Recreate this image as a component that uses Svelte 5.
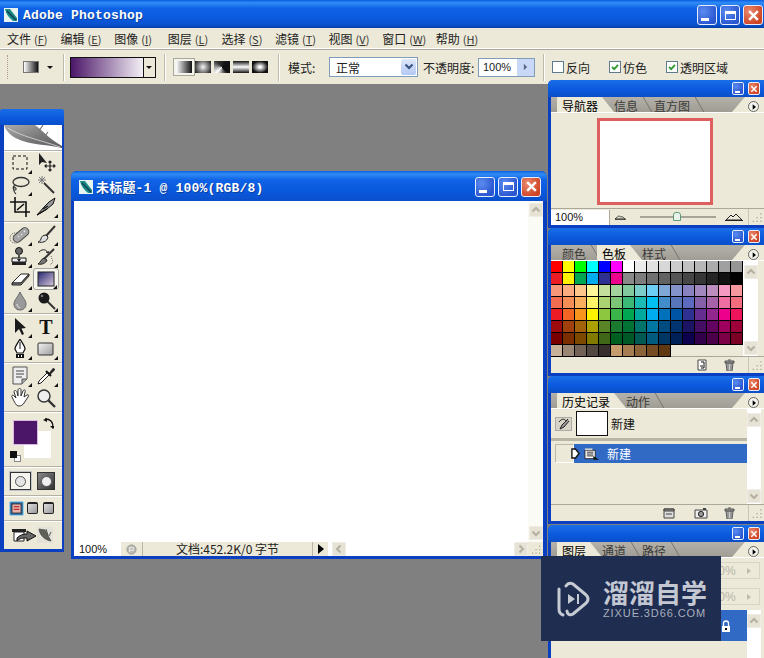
<script>
	const menus = [
		['文件', 'F'],
		['编辑', 'E'],
		['图像', 'I'],
		['图层', 'L'],
		['选择', 'S'],
		['滤镜', 'T'],
		['视图', 'V'],
		['窗口', 'W'],
		['帮助', 'H']
	];

	const gradientTypes = ['linear active', 'radial', 'angle', 'reflected', 'diamond'];

	// standard photoshop swatches, 16 per row
	const swatches = [
		'ff0000 ffff00 00ff00 00ffff 0000ff ff00ff ffffff ebebeb e1e1e1 d7d7d7 cccccc c2c2c2 b7b7b7 acacac a0a0a0 959595',
		'ed1c24 fff200 00a651 00aeef 2e3192 ec008c 898989 7d7d7d 707070 626262 555555 464646 363636 252525 111111 000000',
		'f7977a f9ad81 fdc68a fff79a c4df9b a2d39c 82ca9d 7bcdc9 6ecff6 7ea7d8 8493ca 8882be a187be bc8dbf f49ac2 f6989d',
		'f26c4f f68e55 fbaf5c fff467 acd372 7cc576 3bb878 1abbb4 00bff3 438cca 5574b9 5c6bc0 855fa8 a763a8 ee6ea1 f26d7d',
		'ed1c24 f26522 f7941d fff200 8dc63f 39b54a 00a651 00a99d 00aeef 0072bc 0054a6 2e3192 662d91 92278f ec008c ed145b',
		'9e0b0f a0410d a36209 aba000 598527 1a7b30 007236 00746b 0076a3 004b80 003471 1b1464 440e62 630460 9e005d 9e0039',
		'790000 7b2e00 7d4900 827b00 406618 005e20 005826 005952 005b7f 003663 002157 0d004c 32004b 4b0049 7b0046 7a0026',
		'c7b299 998675 736357 534741 362f2d c69c6d a67c52 8c6239 754c24 603913'
	]
		.join(' ')
		.split(' ');
</script>

{#snippet psIcon()}
	<svg class="ps-icon" viewBox="0 0 14 14">
		<rect width="14" height="14" fill="#e8f4f0" />
		<path d="M1 1 L6 1 L13 10 L13 13 L9 13 C5 10 2 6 1 1 Z" fill="#1c8a86" />
		<path d="M3 3 L12 12" stroke="#0b3f52" stroke-width="1.4" />
	</svg>
{/snippet}

{#snippet winButtons(showMax)}
	<div class="win-btns">
		<div class="win-btn"><span class="min-mark"></span></div>
		{#if showMax}
			<div class="win-btn"><span class="max-mark"></span></div>
		{/if}
		<div class="win-btn close">
			<svg viewBox="0 0 12 12"><path d="M2 2 L10 10 M10 2 L2 10" /></svg>
		</div>
	</div>
{/snippet}

{#snippet chevron(dir)}
	<div class="scroll-btn {dir}">
		<svg viewBox="0 0 10 10"><path d="M1.5 6.5 L5 3 L8.5 6.5" /></svg>
	</div>
{/snippet}

{#snippet tabStrip(tabs, active)}
	<div class="tabs">
		{#each tabs as tab, i}
			<div class="tab" class:active={i === active}>{tab}</div>
		{/each}
		<div class="tabs-end"></div>
		<div class="panel-menu"><svg viewBox="0 0 6 8"><path d="M1 0 L6 4 L1 8 Z" /></svg></div>
	</div>
{/snippet}

{#snippet grip()}
	<svg class="grip" viewBox="0 0 12 12">
		<path d="M9 3h1v1H9z M6 6h1v1H6z M9 6h1v1H9z M3 9h1v1H3z M6 9h1v1H6z M9 9h1v1H9z" fill="#a8a494" />
	</svg>
{/snippet}

<div class="app">
	<header class="titlebar">
		{@render psIcon()}
		<span class="app-name">Adobe Photoshop</span>
		{@render winButtons(true)}
	</header>

	<nav class="menubar">
		{#each menus as [label, key]}
			<div class="menu-item">{label}<span class="key">(<u>{key}</u>)</span></div>
		{/each}
	</nav>

	<div class="options">
		<div class="opt-grip"></div>
		<div class="preset">
			<div class="preset-swatch"></div>
			<span class="mini-arrow"></span>
		</div>
		<div class="opt-sep"></div>
		<div class="gradient-picker">
			<div class="gradient-fill"></div>
			<div class="gradient-arrow"><span class="mini-arrow"></span></div>
		</div>
		<div class="opt-sep"></div>
		<div class="grad-types">
			{#each gradientTypes as type}
				<div class="grad-type {type}"></div>
			{/each}
		</div>
		<div class="opt-sep"></div>
		<span class="opt-label mode-label">模式:</span>
		<div class="select">
			<span>正常</span>
			<div class="select-btn">
				<svg viewBox="0 0 10 8"><path d="M1.5 1.5 L5 5 L8.5 1.5" /></svg>
			</div>
		</div>
		<span class="opt-label opacity-label">不透明度:</span>
		<div class="opacity">
			<span>100%</span>
			<div class="opacity-btn"><svg viewBox="0 0 6 8"><path d="M1 0 L5 4 L1 8 Z" /></svg></div>
		</div>
		<div class="opt-sep"></div>
		<label class="check first"><span class="box"></span>反向</label>
		<label class="check second">
			<span class="box"><svg viewBox="0 0 10 10"><path d="M2 5 L4.2 7.2 L8 2.8" /></svg></span>仿色
		</label>
		<label class="check third">
			<span class="box"><svg viewBox="0 0 10 10"><path d="M2 5 L4.2 7.2 L8 2.8" /></svg></span>透明区域
		</label>
	</div>

	<main class="workspace">
		<!-- toolbox -->
		<aside class="toolbox">
			<div class="toolbox-title"></div>
			<div class="feather">
				<svg viewBox="0 0 58 24">
					<defs>
						<linearGradient id="featherFill" x1="0" x2="1" y1="0" y2="1">
							<stop offset="0" stop-color="#adadad" />
							<stop offset="0.55" stop-color="#787878" />
							<stop offset="1" stop-color="#5c5c5c" />
						</linearGradient>
					</defs>
					<path
						d="M0 0 L31 0 C37 4 44 13 58 21 L58 23 C46 20 33 20 22 17 C11 14 3 9 0 0 Z"
						fill="url(#featherFill)"
					/>
					<path d="M4 3 C16 11 36 15 56 22" stroke="#dcdcdc" stroke-width="0.8" fill="none" />
					<path d="M35 6 L39 0 M41 11 L44 7" stroke="#777" stroke-width="1.2" />
				</svg>
			</div>

			<div class="tool-group g3">
				<div class="tool fly">
					<svg viewBox="0 0 22 20"><rect x="4" y="3" width="14" height="13" fill="none" stroke="#111" stroke-dasharray="3 2" /></svg>
				</div>
				<div class="tool">
					<svg viewBox="0 0 22 20">
						<path d="M4 0 L4 12 L7 9 L12 10 Z" fill="#222" />
						<path d="M15 8 V18 M10 13 H20 M13.5 9.5 L15 8 L16.5 9.5 M13.5 16.5 L15 18 L16.5 16.5 M11.5 11.5 L10 13 L11.5 14.5 M18.5 11.5 L20 13 L18.5 14.5" fill="none" stroke="#222" stroke-width="1.2" />
					</svg>
				</div>
				<div class="tool fly">
					<svg viewBox="0 0 22 20">
						<ellipse cx="12" cy="7" rx="8" ry="4.5" fill="none" stroke="#333" stroke-width="1.3" />
						<path d="M6 10 C3 12 4 15 6 15 C8 15 7 12 5 12 C4 15 5 17 7 19" fill="none" stroke="#333" stroke-width="1.1" />
					</svg>
				</div>
				<div class="tool">
					<svg viewBox="0 0 22 20">
						<path d="M9 8 L19 18" stroke="#333" stroke-width="2" />
						<path d="M7 1 V9 M3 5 H11 M4 2 L10 8 M10 2 L4 8" stroke="#777" stroke-width="1" />
					</svg>
				</div>
				<div class="tool">
					<svg viewBox="0 0 22 20"><path d="M6 0 V15 H21 M1 5 H17 V20 M8 13 L15 7" fill="none" stroke="#111" stroke-width="1.6" /></svg>
				</div>
				<div class="tool fly">
					<svg viewBox="0 0 22 20">
						<path d="M2 18 L10 9 L14 5 L20 1 L18 7 L12 12 Z" fill="#999" stroke="#111" />
						<path d="M2 18 L12 12 M8 12 L13 9" stroke="#111" stroke-width="1.2" />
					</svg>
				</div>
			</div>

			<div class="tool-group g4">
				<div class="tool fly">
					<svg viewBox="0 0 22 20">
						<circle cx="6" cy="13" r="5" fill="none" stroke="#555" stroke-dasharray="1 1" />
						<rect x="3" y="6" width="18" height="8" rx="4" transform="rotate(-40 12 10)" fill="#a6a6a6" stroke="#444" />
						<path d="M9 11 L10 12 M12 9 L13 10 M15 6 L16 7" stroke="#eee" stroke-width="1.2" />
					</svg>
				</div>
				<div class="tool fly">
					<svg viewBox="0 0 22 20">
						<path d="M20 1 L11 11" stroke="#333" stroke-width="2" />
						<path d="M11 10 C8 10 6 12 6 14 C5 16 4 17 3 17 C7 18 12 17 13 12 Z" fill="#ddd" stroke="#222" />
					</svg>
				</div>
				<div class="tool fly">
					<svg viewBox="0 0 22 20">
						<circle cx="10" cy="4" r="3.5" fill="#666" stroke="#111" />
						<path d="M9 7 H11 V11 H9 Z" fill="#555" />
						<path d="M3 11 H17 V15 H3 Z" fill="#eee" stroke="#111" />
						<path d="M3 15 H17 V18 H3 Z" fill="#222" />
						<path d="M8 12 L12 12 L10 15 Z" fill="#222" />
					</svg>
				</div>
				<div class="tool fly">
					<svg viewBox="0 0 22 20">
						<path d="M19 2 L9 12" stroke="#333" stroke-width="2" />
						<path d="M9 11 C6 12 6 15 3 17 C7 18 11 16 12 13 Z" fill="#777" stroke="#222" />
						<path d="M4 5 C8 1 12 3 13 6 M13 6 L11 5 M13 6 L14 4" fill="none" stroke="#222" />
						<path d="M16 9 L18 15 L15 18" fill="none" stroke="#666" stroke-dasharray="1 1" />
					</svg>
				</div>
				<div class="tool fly">
					<svg viewBox="0 0 22 20">
						<path d="M3 14 L12 5 L20 5 L12 14 Z" fill="#fff" stroke="#222" />
						<path d="M3 14 L3 16 L12 16 L20 7 L20 5 L12 14 Z" fill="#888" stroke="#222" />
					</svg>
				</div>
				<div class="tool fly picked">
					<svg viewBox="0 0 22 20">
						<defs>
							<linearGradient id="gradTool" x1="0" x2="1" y1="0" y2="1">
								<stop offset="0" stop-color="#26276e" />
								<stop offset="1" stop-color="#d9c8de" />
							</linearGradient>
						</defs>
						<rect x="3" y="3" width="16" height="14" fill="url(#gradTool)" stroke="#222" />
					</svg>
				</div>
				<div class="tool fly">
					<svg viewBox="0 0 22 20">
						<path d="M11 1 C9 6 5 9 5 13 C5 17 8 19 11 19 C14 19 17 17 17 13 C17 9 13 6 11 1 Z" fill="#999" stroke="#666" />
						<path d="M8 13 C8 15 9 16 11 17" stroke="#eee" fill="none" />
					</svg>
				</div>
				<div class="tool fly">
					<svg viewBox="0 0 22 20">
						<path d="M12 10 L20 18" stroke="#333" stroke-width="2" />
						<circle cx="9" cy="7" r="5.5" fill="#1a1a1a" />
						<circle cx="7" cy="5" r="1.3" fill="#777" />
					</svg>
				</div>
			</div>

			<div class="tool-group g2">
				<div class="tool fly">
					<svg viewBox="0 0 22 20"><path d="M6 1 L6 16 L10 12 L13 18 L15 17 L12.5 11.5 L17 11 Z" fill="#1a1a1a" /></svg>
				</div>
				<div class="tool fly"><span class="type-t">T</span></div>
				<div class="tool fly">
					<svg viewBox="0 0 22 20">
						<path d="M11 0 C9 4 6 7 6 10 L8 14 H14 L16 10 C16 7 13 4 11 0 Z" fill="#fff" stroke="#111" stroke-width="1.2" />
						<path d="M11 3 V10" stroke="#111" />
						<path d="M7 15 H15 V19 H7 Z" fill="#111" />
						<path d="M9 16 H10 V18 H9 Z M12 16 H13 V18 H12 Z" fill="#fff" />
					</svg>
				</div>
				<div class="tool fly">
					<svg viewBox="0 0 22 20">
						<defs>
							<linearGradient id="rectTool" x1="0" x2="1" y1="0" y2="1">
								<stop offset="0" stop-color="#f4f4f4" />
								<stop offset="1" stop-color="#9c9c9c" />
							</linearGradient>
						</defs>
						<rect x="3" y="4" width="15" height="12" rx="1" fill="url(#rectTool)" stroke="#333" />
					</svg>
				</div>
			</div>

			<div class="tool-group g2">
				<div class="tool fly">
					<svg viewBox="0 0 22 20">
						<path d="M4 1 H18 V13 L13 18 H4 Z" fill="#eee" stroke="#555" />
						<path d="M7 5 H15 M7 8 H15 M7 11 H13" stroke="#444" />
						<path d="M18 13 H13 V18" fill="#aaa" stroke="#555" />
					</svg>
				</div>
				<div class="tool fly">
					<svg viewBox="0 0 22 20">
						<path d="M13 6 L4 15 L3 18 L6 17 L15 8 Z" fill="#fff" stroke="#222" />
						<path d="M11 5 L16 10" stroke="#111" stroke-width="2" />
						<path d="M14 7 L18 2 A2 2 0 0 1 20 4 L15 9 Z" fill="#222" />
					</svg>
				</div>
				<div class="tool">
					<svg viewBox="0 0 22 20">
						<path d="M3 9 C2 8 4 6 5 8 L7 10 L5 4 C5 2 7 2 8 4 L9 8 L9 2 C9 0 12 0 12 2 L12 8 L14 3 C15 1 17 2 16 4 L15 9 L18 7 C20 6 20 8 19 9 L15 15 C14 17 12 18 10 18 C7 18 6 15 3 9 Z" fill="#fff" stroke="#333" />
					</svg>
				</div>
				<div class="tool">
					<svg viewBox="0 0 22 20">
						<path d="M13 12 L20 19" stroke="#333" stroke-width="2.4" />
						<circle cx="9" cy="8" r="6" fill="#eee" stroke="#333" stroke-width="1.4" />
					</svg>
				</div>
			</div>

			<div class="colors">
				<div class="bg-color"></div>
				<div class="fg-color"></div>
				<svg class="swap" viewBox="0 0 12 12">
					<path d="M3 1 C8 1 11 4 11 9" fill="none" stroke="#111" stroke-width="1.3" />
					<path d="M5 0 L1 2 L5 4 Z M8 8 L14 8 L11 11 Z" fill="#111" />
				</svg>
				<div class="default-colors"><span class="d-bg"></span><span class="d-fg"></span></div>
			</div>

			<div class="mask-row">
				<div class="mask standard"><span></span></div>
				<div class="mask quick"><span></span></div>
			</div>

			<div class="screen-row">
				<div class="screen active">
					<svg viewBox="0 0 12 12"><rect x="1" y="1" width="10" height="10" fill="#e8b0a8" stroke="#223" /><path d="M3 4 H9 M3 7 H9" stroke="#b33" stroke-width="1.4" /></svg>
				</div>
				<div class="screen"></div>
				<div class="screen"></div>
			</div>

			<div class="jump-row">
				<svg class="jump-arrow" viewBox="0 0 26 16">
					<path d="M1 2 H15 V5 H1 Z" fill="#222" />
					<path d="M3 5 H13 V14 H3 Z" fill="#fff" stroke="#222" />
					<path d="M6 11 C9 8 12 7 16 7 L16 4 L25 9 L16 14 L16 11 C12 11 9 11 6 14 Z" fill="#666" stroke="#111" />
				</svg>
				<svg class="jump-logo" viewBox="0 0 16 16">
					<rect width="16" height="16" fill="#e4e2d8" />
					<path d="M2 2 L8 3 L14 14 C8 13 3 9 2 2 Z" fill="#5f6058" stroke="#333" stroke-width="0.6" />
					<path d="M9 2 L11 8 M14 5 L12 9" stroke="#555" />
				</svg>
			</div>
		</aside>

		<!-- document window -->
		<section class="doc">
			<div class="doc-title">
				{@render psIcon()}
				<span class="doc-name">未标题-1 @ 100%(RGB/8)</span>
				{@render winButtons(true)}
			</div>
			<div class="doc-body">
				<div class="canvas"></div>
				<div class="v-scroll">
					{@render chevron('up')}
					{@render chevron('down')}
				</div>
			</div>
			<div class="doc-status">
				<div class="zoom-box">100%</div>
				<div class="status-icon">
					<svg viewBox="0 0 12 12"><circle cx="6" cy="6" r="5" fill="#bcbab0" stroke="#999" /><path d="M4 9 V4 H8 V7 H4" fill="none" stroke="#eee" /></svg>
				</div>
				<div class="doc-info">文档:452.2K/0 字节</div>
				<div class="status-arrow"><svg viewBox="0 0 6 10"><path d="M0 0 L6 5 L0 10 Z" /></svg></div>
				<div class="h-scroll">
					{@render chevron('left')}
					<div class="h-track"></div>
					{@render chevron('right')}
				</div>
				{@render grip()}
			</div>
		</section>

		<!-- navigator -->
		<section class="panel nav-panel">
			<div class="panel-title">{@render winButtons(false)}</div>
			{@render tabStrip(['导航器', '信息', '直方图'], 0)}
			<div class="nav-view"><div class="proxy"></div></div>
			<div class="panel-foot nav-foot">
				<div class="nav-zoom">100%</div>
				<svg class="mount small" viewBox="0 0 14 7"><path d="M0 6 L5 2 L7 3.5 L9 3 L13 6 Z" fill="none" stroke="#222" /><path d="M0 6.5 H14" stroke="#222" /></svg>
				<div class="slider"><span class="thumb"></span></div>
				<svg class="mount big" viewBox="0 0 18 8"><path d="M1 7 L6 2 L8 4 L11 1 L17 7 Z" fill="none" stroke="#222" /><path d="M0 7.5 H18" stroke="#222" /></svg>
				{@render grip()}
			</div>
		</section>

		<!-- swatches -->
		<section class="panel swatch-panel">
			<div class="panel-title">{@render winButtons(false)}</div>
			{@render tabStrip(['颜色', '色板', '样式'], 1)}
			<div class="panel-body">
				<div class="swatches">
					{#each swatches as hex}
						<span class="swatch" style="background:#{hex}"></span>
					{/each}
				</div>
				<div class="v-scroll pale">
					{@render chevron('up')}
					{@render chevron('down')}
				</div>
			</div>
			<div class="panel-foot">
				<div class="foot-spacer"></div>
				<svg class="foot-icon" viewBox="0 0 12 12"><path d="M2 1 H10 V11 H2 Z" fill="#fff" stroke="#444" /><path d="M5 3 H8 V9 H5 M7 7 H4" fill="none" stroke="#111" /></svg>
				<svg class="foot-icon trash" viewBox="0 0 12 12"><path d="M3 4 H10 L9 12 H4 Z" fill="#ccc" stroke="#555" /><path d="M2 2 H11 V4 H2 Z M5 1 H8" fill="#999" stroke="#555" /><path d="M5 5 V11 M8 5 V11" stroke="#666" /></svg>
				{@render grip()}
			</div>
		</section>

		<!-- history -->
		<section class="panel history-panel">
			<div class="panel-title">{@render winButtons(false)}</div>
			{@render tabStrip(['历史记录', '动作'], 0)}
			<div class="panel-body">
				<div class="history-list">
					<div class="snapshot">
						<div class="snap-brush">
							<svg viewBox="0 0 12 12"><path d="M10 1 L4 7 L2 11 L6 9 L11 3" fill="#999" stroke="#222" /><path d="M1 4 C4 0 7 1 8 3" fill="none" stroke="#222" /></svg>
						</div>
						<div class="snap-thumb"></div>
						<span>新建</span>
					</div>
					<div class="history-state">
						<div class="state-box"></div>
						<div class="state-row">
							<svg class="state-arrow" viewBox="0 0 10 12"><path d="M1 1 H5 L9 6 L5 11 H1 Z" fill="#fff" stroke="#111" stroke-width="1.5" /></svg>
							<svg class="state-icon" viewBox="0 0 16 14"><path d="M1 3 H12 V12 H1 Z" fill="#fff" stroke="#222" /><path d="M1 1 H9 V3 H1 Z" fill="#ccc" /><path d="M3 5 H10 M3 7 H10 M3 9 H10" stroke="#222" /><path d="M10 9 L16 13 H10 Z" fill="#111" /></svg>
							<span>新建</span>
						</div>
					</div>
				</div>
				<div class="v-scroll pale">
					{@render chevron('up')}
					{@render chevron('down')}
				</div>
			</div>
			<div class="panel-foot">
				<div class="foot-spacer"></div>
				<svg class="foot-icon set" viewBox="0 0 12 12"><path d="M1 2 H11 V11 H1 Z" fill="#ddd" stroke="#444" /><path d="M1 2 H11 V4 H1 Z M3 7 H9" fill="#888" stroke="#444" /></svg>
				<svg class="foot-icon camera" viewBox="0 0 14 12"><path d="M1 3 H13 V11 H1 Z" fill="#eee" stroke="#444" /><circle cx="7" cy="7" r="2.6" fill="#999" stroke="#222" /><path d="M9 1 H12 V3 H9 Z" fill="#444" /></svg>
				<svg class="foot-icon trash" viewBox="0 0 12 12"><path d="M3 4 H10 L9 12 H4 Z" fill="#ccc" stroke="#555" /><path d="M2 2 H11 V4 H2 Z M5 1 H8" fill="#999" stroke="#555" /><path d="M5 5 V11 M8 5 V11" stroke="#666" /></svg>
				{@render grip()}
			</div>
		</section>

		<!-- layers, mostly under the watermark -->
		<section class="panel layers-panel">
			<div class="panel-title">{@render winButtons(false)}</div>
			{@render tabStrip(['图层', '通道', '路径'], 0)}
			<div class="layer-opts">
				<div class="layer-field"><span>100%</span><i></i></div>
				<div class="layer-field"><span>100%</span><i></i></div>
			</div>
			<div class="panel-body">
				<div class="layer-list">
					<div class="layer-row">
						<svg class="lock" viewBox="0 0 12 12"><path d="M3.5 6 V3.5 A2.5 2.5 0 0 1 8.5 3.5 V6" fill="none" stroke="#fff" stroke-width="1.3" /><path d="M2 6 H10 V12 H2 Z" fill="#fff" /><path d="M5 8 H7 V10 H5 Z" fill="#111" /></svg>
					</div>
				</div>
				<div class="v-scroll pale">{@render chevron('up')}</div>
			</div>
		</section>

		<!-- watermark -->
		<div class="watermark">
			<svg class="wm-logo" viewBox="0 0 34 36">
				<path d="M3 8 V28 C3 31 4 33 7 34" fill="none" stroke="#c5cad3" stroke-width="3" stroke-linecap="round" />
				<path d="M10 5 C12 2 15 2 17 3 L29 13 C33 16 33 20 29 23 L17 33 C14 35 11 33 11 30" fill="none" stroke="#c5cad3" stroke-width="3" stroke-linecap="round" />
				<path d="M12 13 L19 18 L12 23 Z" fill="#c5cad3" />
				<path d="M21 13 H23 V23 H21 Z" fill="#c5cad3" />
			</svg>
			<div class="wm-text">
				<div class="wm-name">溜溜自学</div>
				<div class="wm-url">ZIXUE.3D66.COM</div>
			</div>
		</div>
	</main>
</div>

<style>
	:global(body) {
		margin: 0;
		background: #808080;
	}
	.app {
		width: 764px;
		height: 658px;
		display: flex;
		flex-direction: column;
		overflow: hidden;
		font-family: 'Noto Sans CJK SC', 'Liberation Sans', sans-serif;
		font-size: 12px;
		color: #111;
		background: #808080;
	}

	/* Main window chrome */
	.titlebar {
		height: 28px;
		flex: none;
		display: flex;
		align-items: center;
		padding: 2px 1px 0 4px;
		box-sizing: border-box;
		background: linear-gradient(to bottom, #0a5ee0 0%, #2f8cf5 10%, #0f62e6 30%, #0a58dc 70%, #0a4fcb 90%, #003ea8 100%);
	}
	.ps-icon {
		width: 14px;
		height: 14px;
		flex: none;
	}
	.app-name {
		margin-left: 5px;
		font-family: 'Liberation Mono', monospace;
		font-weight: 700;
		font-size: 13px;
		letter-spacing: 0.2px;
		color: #fff;
		text-shadow: 1px 1px 0 #0a3f9c;
	}
	.win-btns {
		margin-left: auto;
		display: flex;
		gap: 3px;
	}
	.win-btn {
		width: 18px;
		height: 18px;
		border: 1px solid #e8eefc;
		border-radius: 3px;
		background: radial-gradient(circle at 30% 30%, #5b8cf0, #2a56d0 75%);
		position: relative;
		display: flex;
		align-items: center;
		justify-content: center;
	}
	.win-btn.close {
		background: radial-gradient(circle at 30% 30%, #ea8a6e, #cf4526 75%);
	}
	.win-btn svg {
		width: 13px;
		height: 13px;
	}
	.win-btn svg path {
		stroke: #fff;
		stroke-width: 2.2;
		fill: none;
	}
	.min-mark {
		width: 8px;
		height: 3px;
		background: #fff;
		margin: 9px 5px 0 0;
	}
	.max-mark {
		width: 11px;
		height: 9px;
		border: 1px solid #fff;
		border-top-width: 3px;
		box-sizing: border-box;
	}

	.menubar {
		height: 21px;
		flex: none;
		display: flex;
		align-items: center;
		padding-left: 7px;
		background: #ece9d8;
		border-bottom: 1px solid #aca899;
		box-shadow: inset 0 -1px 0 #fff;
	}
	.menu-item {
		width: 53.6px;
		flex: none;
		white-space: nowrap;
		color: #222;
	}
	.key {
		font-size: 11px;
		margin-left: 3px;
		color: #333;
	}

	/* Options bar */
	.options {
		height: 34px;
		flex: none;
		display: flex;
		align-items: center;
		background: #ece9d8;
		color: #222;
	}
	.opt-grip {
		width: 1px;
		height: 24px;
		margin-left: 7px;
		border-left: 1px dotted #b09a90;
		box-sizing: border-box;
	}
	.opt-sep {
		width: 1px;
		height: 27px;
		background: #bdbaa9;
		border-right: 1px solid #fff;
		flex: none;
	}
	.preset {
		width: 55px;
		display: flex;
		align-items: center;
		padding-left: 15px;
		box-sizing: border-box;
	}
	.preset-swatch {
		width: 16px;
		height: 12px;
		background: linear-gradient(to right, #fff, #111);
		border: 1px solid #777;
		box-sizing: border-box;
	}
	.mini-arrow {
		width: 0;
		height: 0;
		border: 3px solid transparent;
		border-top: 3px solid #111;
		border-bottom: 0;
		margin-left: 8px;
	}
	.gradient-picker {
		width: 86px;
		height: 21px;
		margin: 0 8px 0 5px;
		border: 1px solid #111;
		box-sizing: border-box;
		display: flex;
		flex: none;
	}
	.gradient-fill {
		flex: 1;
		background: linear-gradient(to right, #4b1668, #f4f0f6);
	}
	.gradient-arrow {
		width: 11px;
		border-left: 1px solid #111;
		background: #ece9d8;
		display: flex;
		align-items: center;
	}
	.gradient-arrow .mini-arrow {
		margin-left: 2px;
	}
	.grad-types {
		display: flex;
		gap: 3px;
		width: 112px;
		padding-left: 10px;
		box-sizing: border-box;
	}
	.grad-type {
		width: 16px;
		height: 12px;
		flex: none;
	}
	.grad-type.linear {
		background: linear-gradient(to right, #fff, #111);
		outline: 2px solid #f4f3ec;
		box-shadow: 0 0 0 3px #a9a99a;
	}
	.grad-type.radial {
		background: radial-gradient(circle, #f4f4f4, #1c1c1c 95%);
	}
	.grad-type.angle {
		background: conic-gradient(from 45deg, #111 0 25%, #fff 50%, #333 75%, #111);
	}
	.grad-type.reflected {
		background: linear-gradient(to bottom, #111, #fff 50%, #111);
	}
	.grad-type.diamond {
		background: radial-gradient(ellipse, #fff 10%, #111 70%);
	}
	.opt-label {
		flex: none;
		white-space: nowrap;
	}
	.mode-label {
		margin-left: 8px;
		width: 41px;
	}
	.select {
		width: 89px;
		height: 20px;
		box-sizing: border-box;
		border: 1px solid #7f9db9;
		background: #fff;
		display: flex;
		align-items: center;
		justify-content: space-between;
		padding: 1px;
		flex: none;
	}
	.select span {
		padding-left: 5px;
	}
	.select-btn {
		width: 15px;
		height: 16px;
		border-radius: 2px;
		background: linear-gradient(to bottom, #dfe8fb, #b4c8f4);
		display: flex;
		align-items: center;
		justify-content: center;
	}
	.select-btn svg {
		width: 10px;
		height: 8px;
	}
	.select-btn path {
		fill: none;
		stroke: #33517e;
		stroke-width: 2;
	}
	.opacity-label {
		width: 55px;
		margin-left: 5px;
	}
	.opacity {
		width: 57px;
		height: 19px;
		box-sizing: border-box;
		border: 1px solid #7f9db9;
		background: #fff;
		display: flex;
		align-items: center;
		justify-content: space-between;
		margin-right: 8px;
		font-family: 'Liberation Sans', sans-serif;
		font-size: 11px;
		flex: none;
	}
	.opacity span {
		padding-left: 4px;
	}
	.opacity-btn {
		width: 17px;
		height: 100%;
		background: #c8d8f6;
		display: flex;
		align-items: center;
		justify-content: center;
	}
	.opacity-btn svg {
		width: 5px;
		height: 8px;
	}
	.opacity-btn path {
		fill: #5a6c8c;
	}
	.check {
		display: flex;
		align-items: center;
		gap: 2px;
		white-space: nowrap;
		flex: none;
	}
	.check.first {
		margin-left: 7px;
	}
	.check.second,
	.check.third {
		margin-left: 19px;
	}
	.box {
		width: 12px;
		height: 12px;
		box-sizing: border-box;
		border: 1px solid #5f7a8c;
		background: #fff;
		display: flex;
	}
	.box svg path {
		fill: none;
		stroke: #2f9a2f;
		stroke-width: 1.8;
	}

	/* Free canvas of floating windows */
	.workspace {
		flex: 1;
		position: relative;
	}

	.toolbox {
		position: absolute;
		left: 0;
		top: 25px;
		width: 64px;
		height: 443px;
		box-sizing: border-box;
		background: #ece9d8;
		border: solid #0a3fc0;
		border-width: 0 2px 3px 4px;
		display: flex;
		flex-direction: column;
		border-radius: 4px 4px 0 0;
	}
	.toolbox-title {
		height: 16px;
		margin: 0 -2px 0 -4px;
		flex: none;
		background: linear-gradient(to bottom, #1a6ee8, #0a58dc 60%, #0a4fc8);
		border-radius: 3px 3px 0 0;
	}
	.feather {
		height: 25px;
		background: #fff;
		flex: none;
		overflow: hidden;
	}
	.feather svg {
		width: 58px;
		height: 24px;
		display: block;
	}
	.tool-group {
		display: grid;
		grid-template-columns: 26px 26px;
		grid-auto-rows: 22px;
		padding: 2px 0 0 3px;
		border-top: 1px solid #b4b2a4;
		box-shadow: inset 0 1px 0 #fff;
		flex: none;
		box-sizing: border-box;
	}
	.g3 {
		height: 71px;
		padding-top: 1px;
	}
	.g4 {
		height: 92px;
		padding-top: 2px;
	}
	.g2 {
		height: 49px;
		padding-top: 2px;
	}
	.tool {
		position: relative;
		display: flex;
		align-items: center;
		justify-content: center;
	}
	.tool svg {
		width: 22px;
		height: 20px;
	}
	.tool.fly::after {
		content: '';
		position: absolute;
		right: 1px;
		bottom: 0;
		border: 2px solid transparent;
		border-right-color: #111;
		border-bottom-color: #111;
	}
	.tool.picked {
		background: #f6f5ee;
		border: 1px solid #a6a6a0;
		border-radius: 3px;
		box-sizing: border-box;
	}
	.type-t {
		font-family: 'Liberation Serif', serif;
		font-weight: 700;
		font-size: 20px;
		line-height: 20px;
		color: #111;
	}

	.colors {
		height: 55px;
		flex: none;
		position: relative;
		border-top: 1px solid #b4b2a4;
		box-shadow: inset 0 1px 0 #fff;
		box-sizing: border-box;
	}
	.fg-color {
		position: absolute;
		left: 9px;
		top: 8px;
		width: 25px;
		height: 25px;
		background: #4b1668;
		border: 1px solid #d8b8e0;
		box-sizing: border-box;
	}
	.bg-color {
		position: absolute;
		left: 20px;
		top: 19px;
		width: 27px;
		height: 27px;
		background: #fff;
	}
	.swap {
		position: absolute;
		left: 38px;
		top: 6px;
		width: 12px;
		height: 12px;
	}
	.default-colors {
		position: absolute;
		left: 6px;
		top: 39px;
		width: 11px;
		height: 11px;
	}
	.d-bg,
	.d-fg {
		position: absolute;
		display: block;
		width: 7px;
		height: 7px;
	}
	.d-bg {
		right: 0;
		bottom: 0;
		background: #fff;
		border: 1px solid #888;
		box-sizing: border-box;
	}
	.d-fg {
		left: 0;
		top: 0;
		background: #111;
	}

	.mask-row {
		height: 29px;
		flex: none;
		display: flex;
		align-items: center;
		gap: 5px;
		padding-left: 6px;
		border-top: 1px solid #b4b2a4;
		box-shadow: inset 0 1px 0 #fff;
		box-sizing: border-box;
	}
	.mask {
		display: flex;
		align-items: center;
		justify-content: center;
		box-sizing: border-box;
		height: 18px;
	}
	.mask span {
		width: 11px;
		height: 11px;
		border-radius: 50%;
		border: 1px solid #555;
		box-sizing: border-box;
	}
	.mask.standard {
		width: 21px;
		background: #f5f4ee;
		border: 1px solid #333;
		box-shadow: 0 0 0 1px #bfc5c8;
	}
	.mask.standard span {
		background: #e4e4e4;
	}
	.mask.quick {
		width: 18px;
		margin-left: 1px;
		background: linear-gradient(to bottom right, #888, #333);
		border: 1px solid #333;
	}
	.mask.quick span {
		background: #f0f0f0;
	}

	.screen-row {
		height: 25px;
		flex: none;
		display: flex;
		align-items: center;
		gap: 3px;
		padding-left: 5px;
		border-top: 1px solid #b4b2a4;
		box-shadow: inset 0 1px 0 #fff;
		box-sizing: border-box;
	}
	.screen {
		width: 11px;
		height: 12px;
		border: 1px solid #222;
		border-top-width: 2px;
		background: linear-gradient(to bottom right, #ddd, #999);
		border-radius: 2px;
		box-sizing: border-box;
		flex: none;
	}
	.screen:last-child {
		margin-left: 2px;
	}
	.screen.active {
		width: 15px;
		height: 15px;
		background: #3a7fb0;
		border: 1px solid #9fd0e8;
		display: flex;
		align-items: center;
		justify-content: center;
	}
	.screen.active svg {
		width: 11px;
		height: 11px;
	}

	.jump-row {
		flex: 1;
		display: flex;
		align-items: center;
		padding-left: 7px;
		border-top: 1px solid #b4b2a4;
		box-shadow: inset 0 1px 0 #fff;
	}
	.jump-arrow {
		width: 26px;
		height: 16px;
	}
	.jump-logo {
		width: 16px;
		height: 16px;
	}

	/* Document window */
	.doc {
		position: absolute;
		left: 71px;
		top: 87px;
		width: 476px;
		height: 388px;
		box-sizing: border-box;
		background: #0a3fc0;
		border-radius: 6px 6px 0 0;
		padding: 0 4px 3px 3px;
		display: flex;
		flex-direction: column;
	}
	.doc-title {
		height: 30px;
		margin: 0 -4px 0 -3px;
		padding: 1px 6px 0 8px;
		flex: none;
		display: flex;
		align-items: center;
		box-sizing: border-box;
		background: linear-gradient(to bottom, #0a5ee0 0%, #2f8cf5 10%, #0f62e6 30%, #0a58dc 70%, #0a4fcb 100%);
		border-radius: 6px 6px 0 0;
	}
	.doc-name {
		margin-left: 3px;
		font-family: 'Liberation Mono', 'Noto Sans CJK SC', monospace;
		font-weight: 700;
		font-size: 13px;
		letter-spacing: 0.2px;
		color: #fff;
		text-shadow: 1px 1px 0 #0a3f9c;
		white-space: nowrap;
	}
	.doc-body {
		flex: 1;
		display: flex;
		min-height: 0;
	}
	.canvas {
		flex: 1;
		background: #fff;
	}
	.v-scroll {
		width: 15px;
		flex: none;
		background: #fbfbf6;
		display: flex;
		flex-direction: column;
		justify-content: space-between;
		align-items: center;
		padding: 2px 0;
		box-sizing: border-box;
	}
	.v-scroll.pale {
		width: 14px;
		margin-right: 3px;
		background: #fff;
		padding: 4px 0 1px;
	}
	.scroll-btn {
		width: 14px;
		height: 14px;
		background: #e6e3d6;
		border: 1px solid #f0eee4;
		box-sizing: border-box;
		display: flex;
		align-items: center;
		justify-content: center;
		flex: none;
	}
	.scroll-btn svg {
		width: 10px;
		height: 10px;
	}
	.scroll-btn path {
		fill: none;
		stroke: #b4b0a0;
		stroke-width: 2;
	}
	.scroll-btn.down svg {
		transform: rotate(180deg);
	}
	.scroll-btn.left svg {
		transform: rotate(-90deg);
	}
	.scroll-btn.right svg {
		transform: rotate(90deg);
	}
	.doc-status {
		height: 14px;
		flex: none;
		display: flex;
		background: #ece9d8;
		font-size: 12px;
		line-height: 14px;
	}
	.zoom-box {
		width: 47px;
		box-sizing: border-box;
		padding-left: 5px;
		background: #fff;
		font-family: 'Liberation Sans', sans-serif;
		font-size: 11px;
	}
	.status-icon {
		width: 22px;
		display: flex;
		align-items: center;
		justify-content: center;
		border-right: 1px solid #b8b5a6;
		box-sizing: border-box;
	}
	.status-icon svg {
		width: 11px;
		height: 11px;
	}
	.doc-info {
		width: 170px;
		text-align: center;
		color: #222;
		white-space: nowrap;
		box-sizing: border-box;
		border-right: 1px solid #b8b5a6;
	}
	.status-arrow {
		width: 15px;
		display: flex;
		align-items: center;
		justify-content: center;
		box-sizing: border-box;
	}
	.status-arrow svg {
		width: 6px;
		height: 10px;
	}
	.h-scroll {
		flex: 1;
		display: flex;
		background: #fff;
		padding-left: 4px;
	}
	.h-track {
		flex: 1;
	}
	.grip {
		width: 15px;
		height: 14px;
		flex: none;
		background: #ece9d8;
	}

	/* Palette windows */
	.panel {
		position: absolute;
		left: 548px;
		width: 216px;
		box-sizing: border-box;
		background: #ece9d8;
		border: solid #0a3fc0;
		border-width: 0 0 3px 3px;
		border-radius: 5px 0 0 0;
		display: flex;
		flex-direction: column;
	}
	.nav-panel {
		top: -4px;
		height: 148px;
	}
	.swatch-panel {
		top: 144px;
		height: 148px;
	}
	.history-panel {
		top: 292px;
		height: 148px;
	}
	.layers-panel {
		top: 441px;
		height: 140px;
		border-bottom: 0;
	}
	.panel-title {
		height: 17px;
		margin: 0 0 0 -3px;
		padding-right: 4px;
		flex: none;
		display: flex;
		align-items: center;
		background: linear-gradient(to bottom, #1a6ee8, #0a58dc 60%, #0a4fc8);
		border-radius: 5px 0 0 0;
	}
	.panel-title .win-btns {
		gap: 4px;
	}
	.panel-title .win-btn {
		width: 10px;
		height: 11px;
		border-radius: 2px;
	}
	.panel-title .win-btn svg {
		width: 8px;
		height: 8px;
	}
	.panel-title .min-mark {
		width: 5px;
		height: 2px;
		margin: 6px 2px 0 0;
	}
	.tabs {
		height: 16px;
		flex: none;
		display: flex;
		position: relative;
		padding-left: 11px;
		background: linear-gradient(to bottom, #b4b1aa, #a09d95);
		border-bottom: 1px solid #fff;
		box-sizing: border-box;
		line-height: 18px;
		color: #3c3c38;
	}
	.tab {
		padding-right: 16px;
		position: relative;
		white-space: nowrap;
	}
	.tab::after {
		content: '';
		position: absolute;
		right: 6px;
		top: 0;
		bottom: 0;
		width: 1px;
		background: #77746c;
		transform: skewX(30deg);
	}
	.tab.active {
		margin-left: -5px;
		padding-left: 5px;
		background: #ece9d8;
		color: #000;
		clip-path: polygon(0 0, calc(100% - 12px) 0, 100% 100%, 0 100%);
		z-index: 1;
	}
	.tab.active::after {
		display: none;
	}
	.tabs-end {
		position: absolute;
		right: 0;
		top: 0;
		width: 32px;
		height: 15px;
		background: #ece9d8;
		clip-path: polygon(0 100%, 100% 100%, 100% 0, 40% 0);
	}
	.panel-menu {
		position: absolute;
		right: 5px;
		top: 4px;
		width: 9px;
		height: 9px;
		border: 1px solid #666;
		border-radius: 50%;
		background: #f4f3ec;
		display: flex;
		align-items: center;
		justify-content: center;
	}
	.panel-menu svg {
		width: 4px;
		height: 6px;
		margin-left: 1px;
	}
	.nav-view {
		flex: 1;
		display: flex;
		justify-content: center;
		align-items: flex-start;
		padding: 5px 0 0 0;
		min-height: 0;
		box-sizing: border-box;
		border-bottom: 1px solid #aca899;
	}
	.proxy {
		width: 116px;
		height: 87px;
		box-sizing: border-box;
		border: 3px solid #dd5f5f;
		background: #fff;
		margin-right: 5px;
	}
	.panel-foot {
		height: 16px;
		flex: none;
		display: flex;
		align-items: center;
		position: relative;
	}
	.nav-zoom {
		width: 59px;
		height: 15px;
		line-height: 15px;
		background: #fff;
		padding-left: 4px;
		box-sizing: border-box;
		font-family: 'Liberation Sans', sans-serif;
		font-size: 11px;
		flex: none;
		border-right: 1px solid #aca899;
	}
	.mount.small {
		width: 11px;
		height: 6px;
		margin-left: 5px;
		flex: none;
	}
	.slider {
		width: 76px;
		height: 2px;
		margin: 0 9px 0 14px;
		background: #a6a496;
		position: relative;
		flex: none;
	}
	.thumb {
		position: absolute;
		left: 33px;
		top: -4px;
		width: 8px;
		height: 9px;
		background: #e8f4ec;
		border: 1px solid #5f9a78;
		box-sizing: border-box;
		border-radius: 3px 3px 0 0;
	}
	.mount.big {
		width: 18px;
		height: 8px;
		flex: none;
	}
	.foot-spacer {
		flex: 1;
	}
	.foot-icon {
		width: 12px;
		height: 12px;
		margin-right: 15px;
		flex: none;
	}
	.foot-icon.set {
		margin-right: 19px;
	}
	.foot-icon.trash {
		margin-right: 13px;
	}
	.panel-foot .grip {
		height: 16px;
		width: 16px;
		border-left: 1px solid #c9c6b6;
		box-sizing: border-box;
	}
	.nav-foot .grip {
		margin-left: auto;
	}
	.panel-body {
		flex: 1;
		display: flex;
		min-height: 0;
		border-bottom: 1px solid #aca899;
	}
	.swatches {
		width: 192px;
		flex: none;
		display: grid;
		grid-template-columns: repeat(16, 12px);
		grid-auto-rows: 12px;
		align-content: start;
	}
	.swatch {
		box-sizing: border-box;
		border-right: 1px solid #000;
		border-bottom: 1px solid #000;
	}
	.swatch-panel .v-scroll.pale {
		width: 15px;
		margin-right: auto;
	}
	.history-list {
		flex: 1;
		min-width: 0;
		display: flex;
		flex-direction: column;
	}
	.snapshot {
		height: 29px;
		flex: none;
		display: flex;
		align-items: center;
		border-bottom: 3px solid #b9b6a6;
		color: #111;
	}
	.snap-brush {
		width: 17px;
		height: 14px;
		margin: 0 3px 0 4px;
		background: #d8d5c6;
		border: 1px solid #aaa;
		box-sizing: border-box;
		display: flex;
		align-items: center;
		justify-content: center;
	}
	.snap-brush svg {
		width: 12px;
		height: 12px;
	}
	.snap-thumb {
		width: 32px;
		height: 25px;
		background: #fff;
		border: 1px solid #111;
		box-sizing: border-box;
		margin: 0 3px 0 1px;
	}
	.history-state {
		display: flex;
		height: 19px;
		margin-top: 3px;
	}
	.state-box {
		width: 19px;
		margin-left: 4px;
		flex: none;
		box-sizing: border-box;
		border: 1px solid;
		border-color: #bbb8a8 #fff #fff #bbb8a8;
	}
	.state-row {
		flex: 1;
		background: #316ac5;
		color: #fff;
		display: flex;
		align-items: center;
		line-height: 19px;
	}
	.state-arrow {
		width: 9px;
		height: 11px;
		margin-left: -3px;
		flex: none;
	}
	.state-icon {
		width: 15px;
		height: 14px;
		margin-left: 4px;
		flex: none;
	}
	.state-row span {
		margin-left: 8px;
	}
	.foot-icon.camera {
		width: 14px;
	}
	.layer-opts {
		display: flex;
		flex-direction: column;
		align-items: flex-end;
		gap: 9px;
		padding: 4px 4px 5px 0;
		flex: none;
	}
	.layer-field {
		width: 62px;
		height: 17px;
		display: flex;
		align-items: center;
		justify-content: space-between;
		border: 1px solid #d8d5c6;
		box-sizing: border-box;
		font-family: 'Liberation Sans', sans-serif;
		color: #b8b5a8;
		padding: 0 8px 0 6px;
	}
	.layer-field i {
		border: 3px solid transparent;
		border-left: 4px solid #c0bcae;
		border-right: 0;
	}
	.layer-list {
		flex: 1;
		min-width: 0;
	}
	.layer-row {
		height: 31px;
		background: #316ac5;
		display: flex;
		align-items: center;
		justify-content: flex-end;
		padding-right: 15px;
	}
	.lock {
		width: 12px;
		height: 12px;
	}

	/* Watermark sits over the layers palette */
	.watermark {
		position: absolute;
		left: 541px;
		top: 472px;
		width: 180px;
		height: 85px;
		background: #1f2d50;
		display: flex;
		align-items: center;
		padding-left: 15px;
		box-sizing: border-box;
		z-index: 5;
	}
	.wm-logo {
		width: 34px;
		height: 36px;
		flex: none;
	}
	.wm-text {
		margin-left: 13px;
	}
	.wm-name {
		font-size: 26px;
		line-height: 30px;
		font-weight: 700;
		color: #c3c8d2;
		white-space: nowrap;
	}
	.wm-url {
		font-family: 'Liberation Sans', sans-serif;
		font-size: 11px;
		line-height: 13px;
		letter-spacing: 0.9px;
		color: #a9afbc;
		white-space: nowrap;
	}
</style>
